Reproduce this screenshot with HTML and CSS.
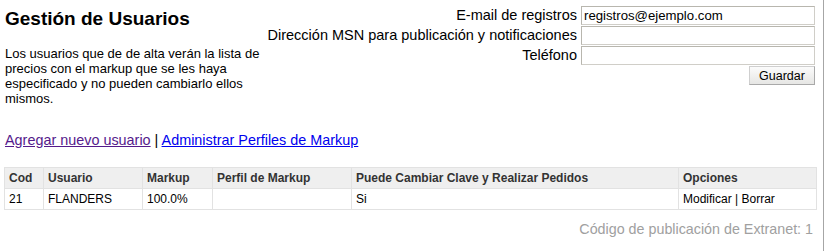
FILE: index.html
```html
<!DOCTYPE html>
<html lang="es">
<head>
<meta charset="utf-8">
<title>Gestión de Usuarios</title>
<link rel="stylesheet" href="styles.css">
</head>
<body>
<div class="page">
  <div class="top">
    <div class="intro">
      <h1 class="title">Gestión de Usuarios</h1>
      <p class="desc">Los usuarios que de de alta verán la lista de precios con el markup que se les haya especificado y no pueden cambiarlo ellos mismos.</p>
    </div>
    <form class="settings">
      <label class="lbl" for="email">E-mail de registros</label>
      <input class="field" id="email" type="text" value="registros@ejemplo.com">
      <label class="lbl" for="msn">Dirección MSN para publicación y notificaciones</label>
      <input class="field" id="msn" type="text" value="">
      <label class="lbl" for="tel">Teléfono</label>
      <input class="field" id="tel" type="text" value="">
      <div class="actions"><button class="btn" type="button">Guardar</button></div>
    </form>
  </div>
  <div class="links"><a class="visited" href="#">Agregar nuevo usuario</a> | <a class="link" href="#">Administrar Perfiles de Markup</a></div>
  <table class="grid">
    <colgroup>
      <col class="c-cod">
      <col class="c-usr">
      <col class="c-mk">
      <col class="c-pf">
      <col class="c-pc">
      <col class="c-op">
    </colgroup>
    <thead>
      <tr>
        <th>Cod</th>
        <th>Usuario</th>
        <th>Markup</th>
        <th>Perfil de Markup</th>
        <th>Puede Cambiar Clave y Realizar Pedidos</th>
        <th>Opciones</th>
      </tr>
    </thead>
    <tbody>
      <tr>
        <td>21</td>
        <td>FLANDERS</td>
        <td>100.0%</td>
        <td></td>
        <td>Si</td>
        <td>Modificar | Borrar</td>
      </tr>
    </tbody>
  </table>
  <div class="footer">Código de publicación de Extranet: 1</div>
</div>
</body>
</html>
```
FILE: styles.css
```css
html, body {
  margin: 0;
  padding: 0;
  background: #fff;
}
body {
  font-family: "Liberation Sans", Arial, sans-serif;
  color: #000;
}
.page {
  width: 824px;
  height: 251px;
  box-sizing: border-box;
  border-right: 1px solid #a6a6a6;
  padding: 6px 8px 0 4px;
}
.top {
  display: flex;
  justify-content: space-between;
  align-items: flex-start;
}
.intro {
  width: 262px;
  padding-left: 1px;
}
.title {
  margin: 2px 0 0 0;
  font-size: 19px;
  font-weight: bold;
  line-height: 22px;
}
.desc {
  margin: 16px 0 0 0;
  font-size: 13px;
  line-height: 15px;
}
.settings {
  display: grid;
  grid-template-columns: auto 234px;
  column-gap: 4px;
  row-gap: 1px;
  margin: 0;
}
.lbl {
  font-size: 14.5px;
  line-height: 19px;
  text-align: right;
  white-space: nowrap;
}
.field {
  width: 234px;
  height: 19px;
  box-sizing: border-box;
  margin: 0;
  padding: 0 2px;
  border: 1px solid #d0cec8;
  border-top-color: #b8b6ae;
  border-left-color: #b8b6ae;
  font-family: "Liberation Sans", Arial, sans-serif;
  font-size: 13.2px;
  color: #000;
  background: #fff;
}
.actions {
  grid-column: 2;
  display: flex;
  justify-content: flex-end;
}
.btn {
  width: 66px;
  height: 19px;
  margin: 0;
  padding: 0;
  border: 1px solid #cfcfcf;
  border-bottom-color: #a9a9a9;
  border-right-color: #a9a9a9;
  background: linear-gradient(#fbfbfb, #e6e6e4);
  font-family: "Liberation Sans", Arial, sans-serif;
  font-size: 12.5px;
  color: #000;
}
.links {
  margin-top: 25px;
  padding-left: 1px;
  font-size: 14.4px;
  line-height: 18px;
}
.visited {
  color: #551a8b;
}
.link {
  color: #0000ee;
}
.grid {
  margin-top: 18px;
  width: 812px;
  table-layout: fixed;
  border-collapse: collapse;
  font-size: 12px;
}
.grid th, .grid td {
  border: 1px solid #e2e2e2;
  padding: 0 3px 0 4px;
  height: 20px;
  text-align: left;
  white-space: nowrap;
}
.grid th {
  background: #efefef;
  font-weight: bold;
  color: #333;
}
.grid td {
  color: #000;
}
.c-cod { width: 39px; }
.c-usr { width: 99px; }
.c-mk { width: 70px; }
.c-pf { width: 139px; }
.c-pc { width: 327px; }
.c-op { width: 138px; }
.footer {
  margin-top: 10px;
  padding-right: 2px;
  text-align: right;
  font-size: 14.3px;
  line-height: 18px;
  color: #a0a0a0;
}
```
